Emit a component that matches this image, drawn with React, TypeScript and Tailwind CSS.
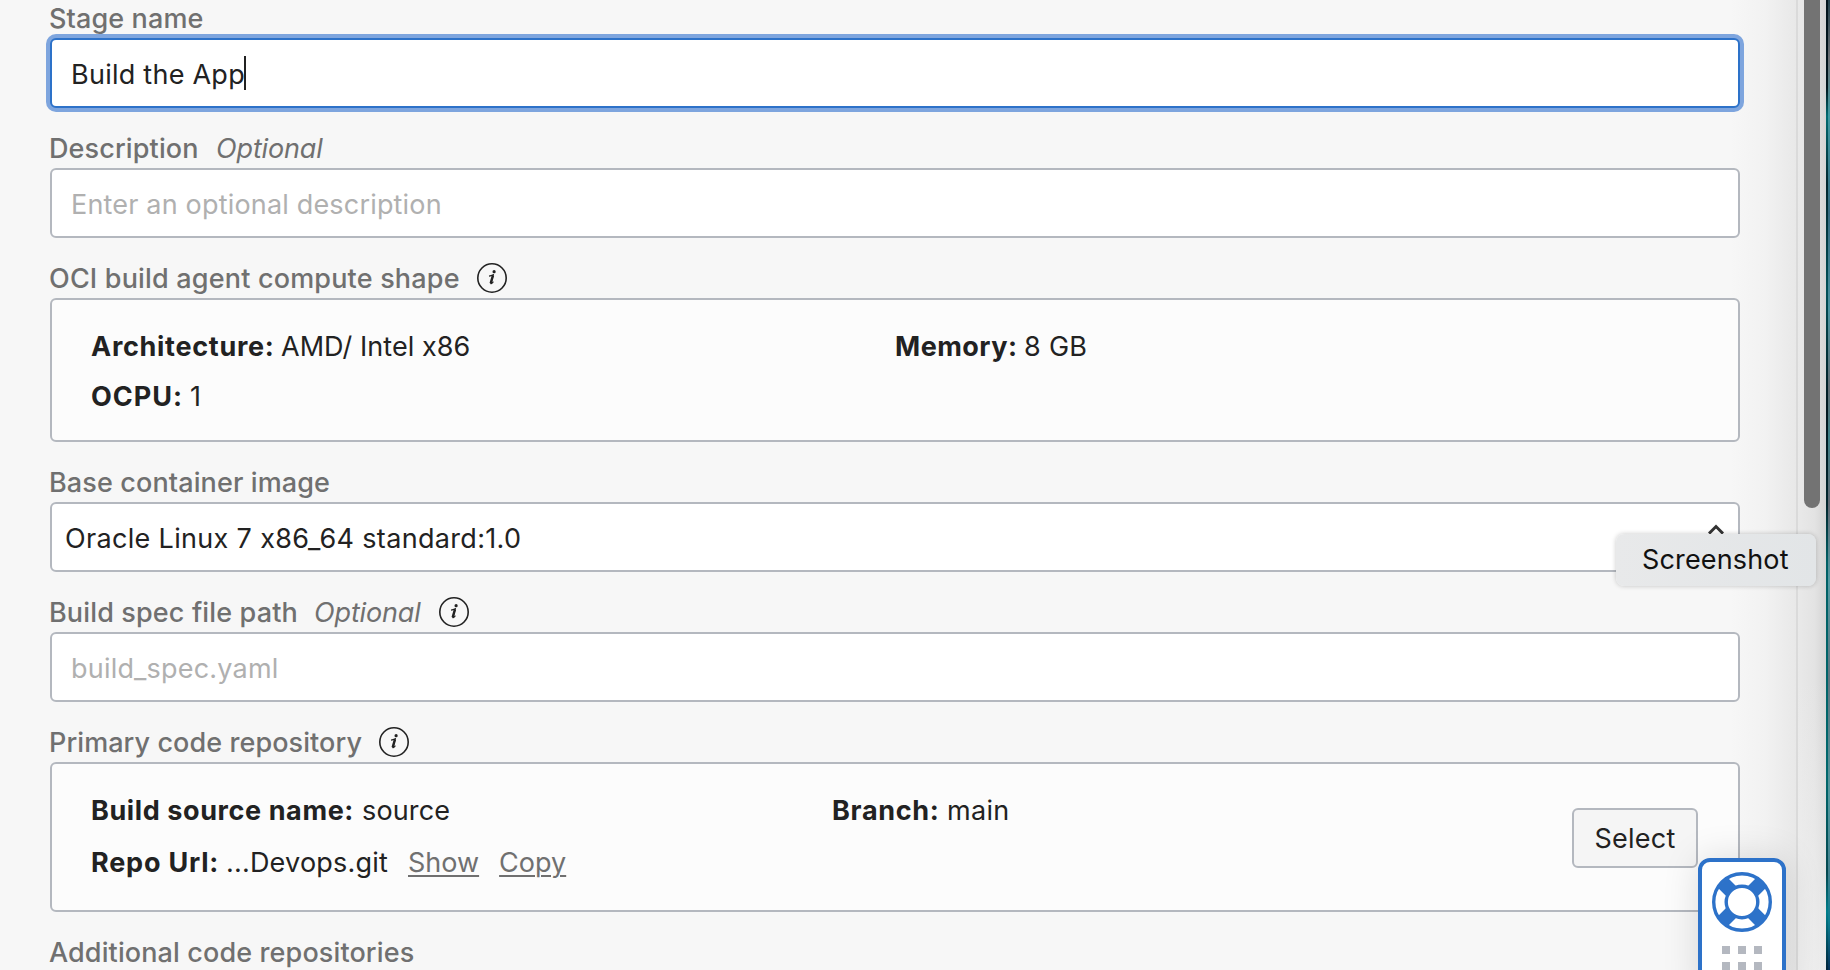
import type { ReactNode } from "react";

function InfoIcon() {
  return (
    <svg width="30" height="30" viewBox="0 0 30 30" fill="none" className="-mt-[2px] shrink-0">
      <circle cx="15" cy="15" r="14.2" stroke="#222" strokeWidth="1.6" />
      <circle cx="17.1" cy="8.7" r="1.6" fill="#222" />
      <path d="M12 13.1c1.5-.1 2.9-.5 4.2-1.2l-2.3 8.1c-.2.9.5.9 1.2.2l1.3-1.5" stroke="#222" strokeWidth="1.2" />
      <path d="M16 12.3l-2.3 8" stroke="#222" strokeWidth="2.4" />
    </svg>
  );
}

function LifeBuoy() {
  return (
    <svg width="60" height="60" viewBox="-30 -30 60 60" fill="none" stroke="#2d72c9">
      <circle r="28.3" fill="#fff" strokeWidth="3.4" />
      <path d="M-19.2-19.2L19.2 19.2M19.2-19.2L-19.2 19.2" strokeWidth="14" />
      <circle r="15.8" fill="#fff" strokeWidth="3.4" />
    </svg>
  );
}

function Label({ children, first = false }: { children: ReactNode; first?: boolean }) {
  return (
    <div
      className={`-ml-px flex h-[36px] shrink-0 items-center pb-[2px] font-medium leading-8 tracking-[0.12px] text-[#707070] ${
        first ? "mt-[2px]" : "mt-6"
      }`}
    >
      {children}
    </div>
  );
}

const box = "shrink-0 rounded-[6px] border-2 border-[#b4b8bf]";
const field = "flex h-[70px] items-center bg-white pt-[4px] leading-8";

function Optional({ className = "" }: { className?: string }) {
  return <span className={`font-normal italic tracking-[-0.15px] ${className}`}>Optional</span>;
}

function Form() {
  return (
    <main className="ml-[50px] flex w-[1690px] flex-col">
      <Label first>Stage name</Label>
      <div className={`shrink-0 rounded-[6px] border-2 border-[#2d72c9] pl-[19px] ring-4 ring-[#7ea5de] tracking-[0.25px] ${field}`}>
        Build the App
        <span className="-ml-px -mt-[5px] h-[34px] w-[2px] bg-[#222]" />
      </div>

      <Label>
        <span className="w-[167px] tracking-[0.12px]">Description</span>
        <Optional />
      </Label>
      <div className={`${box} ${field} pl-[19px] tracking-[0.18px] text-[#b0b0b0]`}>Enter an optional description</div>

      <Label>
        <span className="w-[428px] tracking-[0.18px]">OCI build agent compute shape</span>
        <InfoIcon />
      </Label>
      <section className={`${box} grid h-[144px] grid-cols-[804px_1fr] grid-rows-[50px_50px] bg-[#fcfcfc] pl-[39px] pt-[31px] leading-8`}>
        <div className="flex">
          <b className="w-[190px] tracking-[0.72px]">Architecture:</b>
          <span className="tracking-[0.05px]">AMD/ Intel x86</span>
        </div>
        <div className="flex">
          <b className="w-[129px] tracking-[0.48px]">Memory:</b>
          <span className="tracking-[0.3px]">8 GB</span>
        </div>
        <div className="flex">
          <b className="w-[99px] tracking-[1px]">OCPU:</b>
          <span>1</span>
        </div>
      </section>

      <Label>Base container image</Label>
      <div className={`${box} ${field} justify-between pl-[13px] pr-[14px] tracking-[0.33px]`}>
        Oracle Linux 7 x86_64 standard:1.0
        <svg width="16" height="10" viewBox="0 0 16 10" fill="none" stroke="#333" strokeWidth="3" className="-mt-[20px]">
          <path d="M1 9.5l7-7 7 7" />
        </svg>
      </div>

      <Label>
        <span className="w-[265px] tracking-[0.14px]">Build spec file path</span>
        <Optional className="w-[125px]" />
        <InfoIcon />
      </Label>
      <div className={`${box} ${field} pl-[19px] tracking-[0.2px] text-[#b0b0b0]`}>build_spec.yaml</div>

      <Label>
        <span className="w-[330px] tracking-[0.08px]">Primary code repository</span>
        <InfoIcon />
      </Label>
      <section className={`${box} flex h-[150px] items-center bg-[#fcfcfc] pl-[39px] pr-[40px]`}>
        <div className="grid h-full flex-1 grid-cols-[741px_1fr] grid-rows-[52px_52px] pt-[31px] leading-8">
          <div className="flex">
            <b className="w-[271px] tracking-[0.6px]">Build source name:</b>
            <span className="tracking-[0.15px]">source</span>
          </div>
          <div className="flex">
            <b className="w-[115px] tracking-[0.7px]">Branch:</b>
            <span className="tracking-[0.3px]">main</span>
          </div>
          <div className="flex">
            <b className="w-[135px] tracking-[0.8px]">Repo Url:</b>
            <span className="w-[182px] tracking-[0.2px]">...Devops.git</span>
            <a className="mr-[20px] text-[#707070] underline decoration-2 underline-offset-[3px]">Show</a>
            <a className="text-[#707070] underline decoration-2 underline-offset-[3px]">Copy</a>
          </div>
        </div>
        <button className="mt-px flex h-[60px] w-[126px] items-center justify-center rounded-[6px] border-2 border-[#b4b8bf] bg-[#f5f5f5] pt-[3px] leading-8 tracking-[0.25px]">
          Select
        </button>
      </section>

      <Label>Additional code repositories</Label>
    </main>
  );
}

function HelpWidget() {
  return (
    <div className="absolute left-[1698px] top-[858px] flex h-[140px] w-[88px] flex-col items-center rounded-[12px] border-4 border-[#2d72c9] bg-white pt-[10px] shadow-[0_0_36px_rgba(0,0,0,0.13)]">
      <LifeBuoy />
      <div className="mt-[14px] grid grid-cols-3 gap-2">
        {[0, 1, 2, 3, 4, 5].map((n) => (
          <span key={n} className="size-2 bg-[#b4b8c0]" />
        ))}
      </div>
    </div>
  );
}

export default function App() {
  return (
    <div className="relative flex h-[970px] w-[1830px] overflow-hidden bg-[#f7f7f7] font-[Inter,sans-serif] text-[27px] text-[#222] [font-feature-settings:'calt'_0]">
      <div className="flex w-[1796px] shrink-0 bg-[linear-gradient(to_right,#f7f7f7_1730px,#f2f2f2_1765px,#e8e8e8_1796px)]">
        <Form />
      </div>
      <div className="h-full w-[30px] shrink-0 border-l-2 border-[#dadada] bg-[linear-gradient(to_bottom,transparent_70%,#f0f0f0cc),linear-gradient(to_right,#e9e9e9,#e3e3e3_60%,#d4d4d4)] pl-[6px]">
        <div className="h-[508px] w-[16px] rounded-b-full bg-[#737373]" />
      </div>
      <div className="flex h-full flex-1">
        <div className="w-[2px] bg-[linear-gradient(to_bottom,#02141c,#01161d_9%,#006b72_12%,#02262e_19%,#015058_30%,#02181f_42%,#02262e_52%,#006066_58%,#00686d_80%,#04474f_90%,#007f8c_94%,#01233a)]" />
        <div className="w-[2px] bg-[linear-gradient(to_bottom,#23414c,#6b6f74_6%,#3e99a2_12%,#356a80_22%,#4a93a0_32%,#626d74_40%,#3d7f86_45%,#626873_52%,#539ba3_60%,#62757f_70%,#52999f_82%,#41808e_90%,#0b7e91_95%,#06325b)]" />
      </div>

      <HelpWidget />

      <div
        role="tooltip"
        className="absolute left-[1616px] top-[534px] flex h-[52px] w-[200px] items-center rounded-[8px] bg-[linear-gradient(to_right,#e8e9ea,#e2e5e7)] pl-[26px] text-[#111] leading-8 shadow-[0_0_5px_rgba(0,0,0,0.22)] tracking-[0.15px]"
      >
        Screenshot
      </div>
    </div>
  );
}
